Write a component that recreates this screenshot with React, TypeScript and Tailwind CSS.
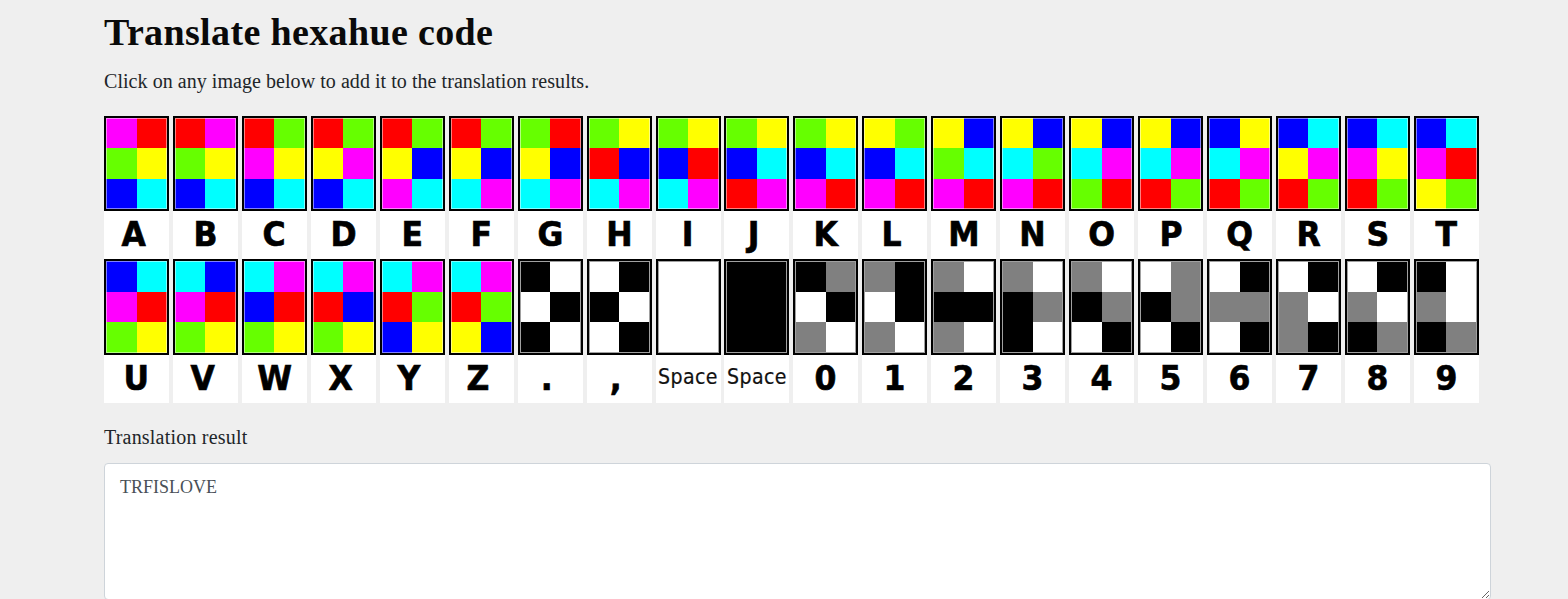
const colors: Record<string, string> = {
  m: 'bg-[#ff00ff]',
  r: 'bg-[#ff0000]',
  g: 'bg-[#66ff00]',
  y: 'bg-[#ffff00]',
  b: 'bg-[#0000ff]',
  c: 'bg-[#00ffff]',
  k: 'bg-black',
  w: 'bg-white',
  a: 'bg-[#808080]',
};

// each code is read left to right, top to bottom over the 2x3 grid
const letters = [
  ['A', 'mrgybc'], ['B', 'rmgybc'], ['C', 'rgmybc'], ['D', 'rgymbc'], ['E', 'rgybmc'],
  ['F', 'rgybcm'], ['G', 'grybcm'], ['H', 'gyrbcm'], ['I', 'gybrcm'], ['J', 'gybcrm'],
  ['K', 'gybcmr'], ['L', 'ygbcmr'], ['M', 'ybgcmr'], ['N', 'ybcgmr'], ['O', 'ybcmgr'],
  ['P', 'ybcmrg'], ['Q', 'bycmrg'], ['R', 'bcymrg'], ['S', 'bcmyrg'], ['T', 'bcmryg'],
  ['U', 'bcmrgy'], ['V', 'cbmrgy'], ['W', 'cmbrgy'], ['X', 'cmrbgy'], ['Y', 'cmrgby'],
  ['Z', 'cmrgyb'], ['.', 'kwwkkw'], [',', 'wkkwwk'], ['Space', 'wwwwww'], ['Space', 'kkkkkk'],
  ['0', 'kawkaw'], ['1', 'akwkaw'], ['2', 'awkkaw'], ['3', 'awkakw'], ['4', 'awkawk'],
  ['5', 'wakawk'], ['6', 'wkaawk'], ['7', 'wkawak'], ['8', 'wkawka'], ['9', 'kwawka'],
];

// these glyphs sit a little left of centre in the source images
const leftHeavy = 'AJLVXYZ.,';

const HexCell = ({ label, code }: { label: string; code: string }) => {
  const mono = /[kwa]/.test(code);
  return (
    <div className="w-[65px] h-[143.5px] flex flex-col cursor-pointer">
      <div className="h-[95.5px] border-2 border-black">
        <div
          className={`w-full h-full grid grid-cols-2 grid-rows-3 outline-1 -outline-offset-1 ${
            mono ? 'outline-[#a0a0a0]' : 'outline-white/50'
          }`}
        >
          {code.split('').map((c, i) => (
            <div key={i} className={colors[c]} />
          ))}
        </div>
      </div>
      <div
        className={`h-[48px] bg-white flex items-center justify-center overflow-hidden text-black font-['DejaVu_Sans',sans-serif] ${
          leftHeavy.includes(label) ? 'pr-1.5' : ''
        }`}
      >
        {label === 'Space' ? (
          <span className="text-[19px] leading-none tracking-[0.4px] scale-y-110 -translate-y-0.5 text-[#111] [-webkit-text-stroke:0.2px_#111]">
            Space
          </span>
        ) : (
          <span className="text-[30px] leading-none font-bold scale-x-105 scale-y-110 [-webkit-text-stroke:0.6px_black]">
            {label}
          </span>
        )}
      </div>
    </div>
  );
};

export default function App() {
  return (
    <div className="h-[599px] overflow-hidden bg-[#efefef] pl-[104px] font-['Liberation_Serif',serif] text-[#212529]">
      <div className="w-[1387px]">
        <h1 className="pt-[10px] text-[38px] leading-[44px] tracking-[0.36px] font-bold text-[#0a0a0a]">
          Translate hexahue code
        </h1>
        <p className="mt-[13px] text-[20px] leading-[28px] tracking-[0.05px]">
          Click on any image below to add it to the translation results.
        </p>
        <div className="mt-[20.75px] flex flex-wrap gap-x-[3.95px]">
          {letters.map(([label, code], i) => (
            <HexCell key={i} label={label} code={code} />
          ))}
        </div>
        <label className="block mt-[20.25px] text-[20px] leading-[28px] tracking-[0.2px]">Translation result</label>
        <textarea
          defaultValue="TRFISLOVE"
          className="block mt-[12px] w-full h-[137px] px-[15px] py-[10px] bg-white border border-[#ced4da] rounded text-[18px] leading-[27px] text-[#495057] resize-y outline-none"
        />
      </div>
    </div>
  );
}
